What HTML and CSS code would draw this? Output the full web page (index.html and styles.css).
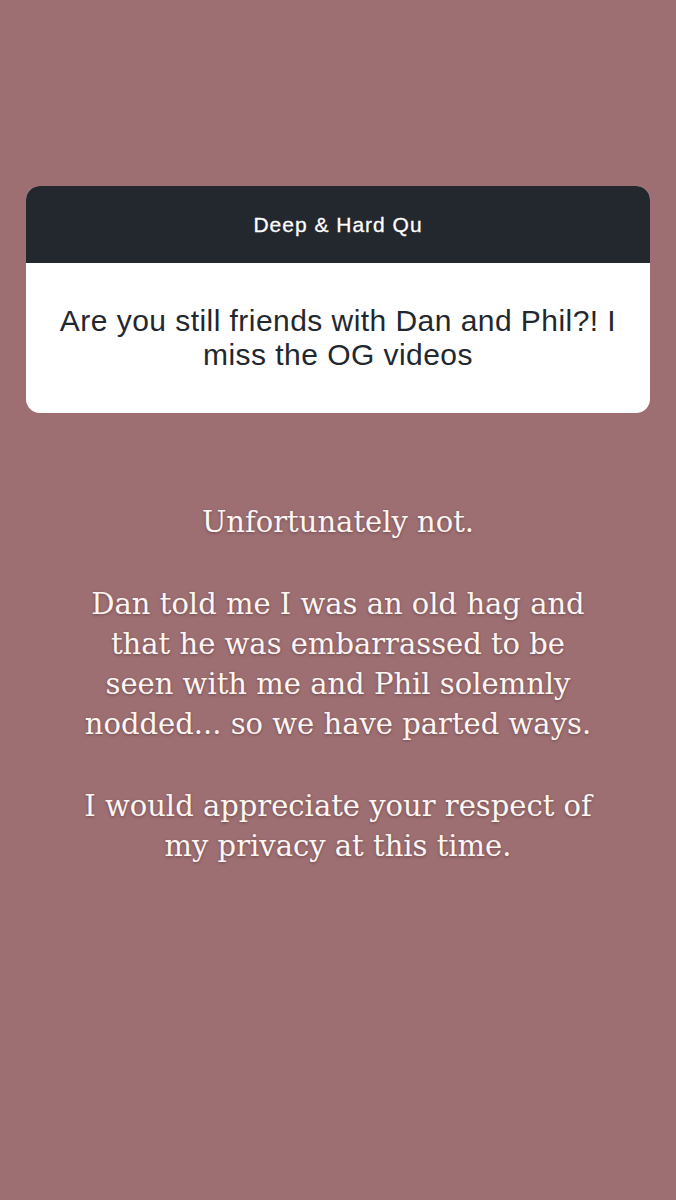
FILE: index.html
```html
<!DOCTYPE html>
<html lang="en">
<head>
    <meta charset="UTF-8">
    <meta name="viewport" content="width=device-width, initial-scale=1.0">
    <title>Story</title>
    <link rel="stylesheet" href="styles.css">
</head>
<body>
    <div class="story">
        <div class="question-card">
            <div class="card-header">Deep &amp; Hard Qu</div>
            <div class="card-body">Are you still friends with Dan and Phil?! I miss the OG videos</div>
        </div>
        <div class="answer">
            <p>Unfortunately not.</p>
            <p>Dan told me I was an old hag and<br>that he was embarrassed to be<br>seen with me and Phil solemnly<br>nodded... so we have parted ways.</p>
            <p>I would appreciate your respect of<br>my privacy at this time.</p>
        </div>
    </div>
</body>
</html>
```

FILE: styles.css
```css
body {
    margin: 0;
    background: #9d6f72;
}

.story {
    height: 1200px;
    padding-top: 186px;
    box-sizing: border-box;
}

.question-card {
    margin: 0 26px;
    border-radius: 14px;
    overflow: hidden;
    background: #fff;
}

.card-header {
    background: #23272e;
    color: #fff;
    height: 77px;
    display: flex;
    align-items: center;
    justify-content: center;
    font-family: "Liberation Sans", Arial, sans-serif;
    font-size: 21px;
    letter-spacing: 1px;
    -webkit-text-stroke: 0.3px #fff;
}

.card-body {
    height: 150px;
    box-sizing: border-box;
    padding: 0 20px;
    display: flex;
    align-items: center;
    justify-content: center;
    text-align: center;
    color: #23272e;
    font-family: "Liberation Sans", Arial, sans-serif;
    font-size: 30px;
    line-height: 34px;
    letter-spacing: 0.45px;
}

.answer {
    margin-top: 89px;
    text-align: center;
    color: #fdf6f4;
    font-family: "DejaVu Serif", "Liberation Serif", serif;
    font-size: 29px;
    line-height: 40px;
    text-shadow: 0 1px 3px rgba(60, 30, 30, 0.45);
}

.answer p {
    margin: 0 0 42px;
}
```
